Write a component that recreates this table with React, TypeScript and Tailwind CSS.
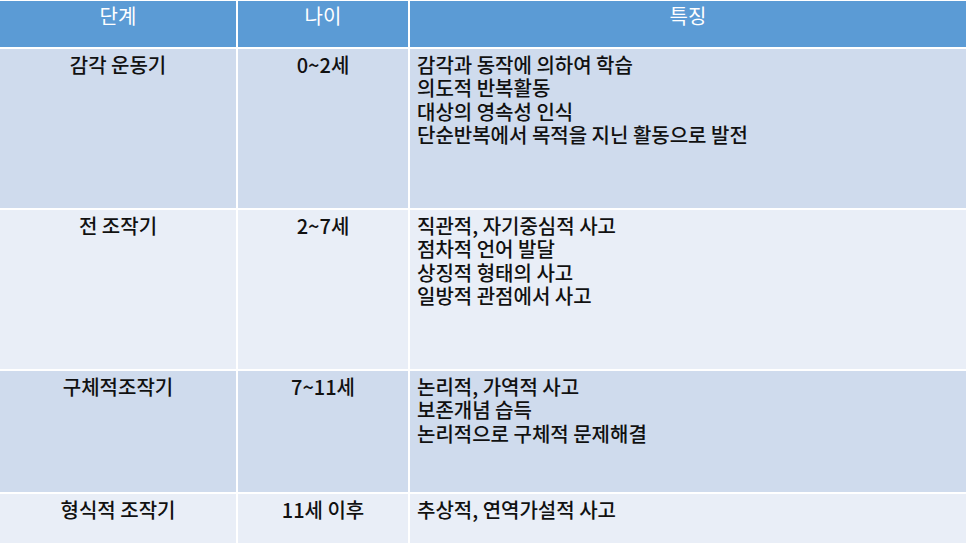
const rows = [
  {
    stage: '감각 운동기',
    age: '0~2세',
    traits: ['감각과 동작에 의하여 학습', '의도적 반복활동', '대상의 영속성 인식', '단순반복에서 목적을 지닌 활동으로 발전'],
    h: 'h-[159px]',
    bg: 'bg-[#cfdbed]',
  },
  {
    stage: '전 조작기',
    age: '2~7세',
    traits: ['직관적, 자기중심적 사고', '점차적 언어 발달', '상징적 형태의 사고', '일방적 관점에서 사고'],
    h: 'h-[159px]',
    bg: 'bg-[#e9eef7]',
  },
  {
    stage: '구체적조작기',
    age: '7~11세',
    traits: ['논리적, 가역적 사고', '보존개념 습득', '논리적으로 구체적 문제해결'],
    h: 'h-[121px]',
    bg: 'bg-[#cfdbed]',
  },
  {
    stage: '형식적 조작기',
    age: '11세 이후',
    traits: ['추상적, 연역가설적 사고'],
    h: 'h-[60px]',
    bg: 'bg-[#e9eef7]',
  },
];

export default function App() {
  return (
    <div
      className="h-[543px] w-[966px] overflow-hidden bg-white pt-px text-[20px] font-medium leading-[23.3px] text-[#111]"
      style={{ fontFamily: '"Noto Sans CJK KR", "Noto Sans", sans-serif' }}
    >
      <div className="grid grid-cols-[236px_170px_556px] gap-[2px]">
        {/* Header */}
        <div className="flex h-[46px] justify-center bg-[#5b9bd5] pt-[3px] font-normal text-white">단계</div>
        <div className="flex h-[46px] justify-center bg-[#5b9bd5] pt-[3px] font-normal text-white">나이</div>
        <div className="flex h-[46px] justify-center bg-[#5b9bd5] pt-[3px] font-normal text-white">특징</div>

        {rows.map((r) => (
          <>
            <div key={r.stage + 'a'} className={`${r.h} ${r.bg} pt-[4px] text-center`}>
              {r.stage}
            </div>
            <div key={r.stage + 'b'} className={`${r.h} ${r.bg} pt-[4px] text-center`}>
              {r.age}
            </div>
            <div key={r.stage + 'c'} className={`${r.h} ${r.bg} pl-[7px] pt-[4px]`}>
              {r.traits.map((t) => (
                <div key={t}>{t}</div>
              ))}
            </div>
          </>
        ))}
      </div>
    </div>
  );
}
